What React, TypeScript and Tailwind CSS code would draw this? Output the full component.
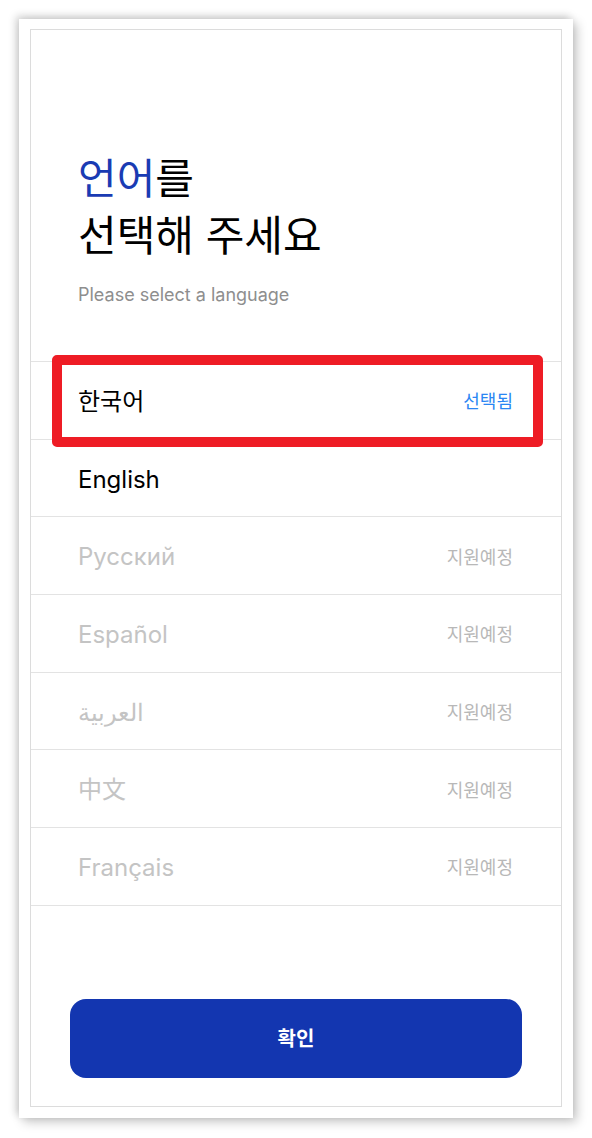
import { useState } from "react";

/* ── Language list ── */

interface Lang {
  id: string;
  label: string;
  available: boolean;
}

const langs: Lang[] = [
  { id: "ko", label: "한국어", available: true },
  { id: "en", label: "English", available: true },
  { id: "ru", label: "Русский", available: false },
  { id: "es", label: "Español", available: false },
  { id: "ar", label: "العربية", available: false },
  { id: "zh", label: "中文", available: false },
  { id: "fr", label: "Français", available: false },
];

const font = "font-['Inter','Noto_Sans_CJK_KR','Noto_Sans',sans-serif]";

export default function App() {
  const [selected, setSelected] = useState("ko");

  return (
    <div className={`min-h-[1138px] w-[592px] bg-white pt-[19px] pl-[19px] ${font}`}>
      {/* Outer frame */}
      <div className="relative w-[554px] h-[1099px] bg-white px-[11px] pt-[10px] pb-[11px] shadow-[-3px_-3px_8px_rgba(0,0,0,0.18),4px_4px_10px_rgba(0,0,0,0.22)]">
        {/* Card */}
        <div className="flex flex-col h-full border border-[#dcdcdc] bg-white">
          <div className="pl-[47px] pr-[47px]">
            <h1 className="mt-[120px] text-[42px] leading-[57px] font-normal text-black">
              <span className="text-[#1a3bb3]">언어</span>를
              <br />
              선택해 주세요
            </h1>
            <p className="mt-[19px] text-[18px] leading-[24px] text-[#8e8e8e]">
              Please select a language
            </p>
          </div>

          <ul className="mt-[54px] border-t border-[#e3e3e3]">
            {langs.map((l) => {
              const isSel = selected === l.id;
              return (
                <li
                  key={l.id}
                  onClick={() => l.available && setSelected(l.id)}
                  className="flex items-center justify-between h-[77.7px] border-b border-[#e3e3e3] pl-[47px] pr-[48px] pt-[3px] cursor-default"
                >
                  <span
                    className={`text-[24px] ${l.available ? "text-black" : "text-[#c4c4c4]"}`}
                  >
                    {l.label}
                  </span>
                  {isSel && <span className="text-[18px] text-[#2a86f3]">선택됨</span>}
                  {!l.available && <span className="text-[18px] text-[#b8b8b8]">지원예정</span>}
                </li>
              );
            })}
          </ul>

          <div className="flex-1" />

          <button className="mx-[39px] mb-[28px] h-[79px] rounded-[16px] bg-[#1336b0] text-white text-[20px] font-bold">
            확인
          </button>
        </div>

        {/* Annotation highlight */}
        <div className="absolute left-[33px] top-[336px] w-[491px] h-[92px] border-[10px] border-[#ee1c25] rounded-[5px] pointer-events-none" />
      </div>
    </div>
  );
}
